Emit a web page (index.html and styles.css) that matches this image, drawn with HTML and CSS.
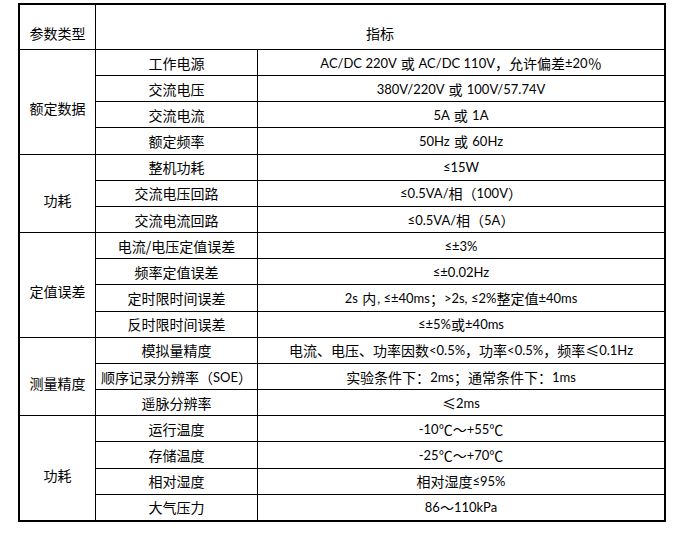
FILE: index.html
```html
<!DOCTYPE html>
<html lang="zh-CN">
<head>
<meta charset="utf-8">
<title>技术参数</title>
<link rel="stylesheet" href="styles.css">
</head>
<body>
<div class="spec">
  <div class="cell head">参数类型</div>
  <div class="cell head wide">指标</div>

  <div class="cell group span4">额定数据</div>
  <div class="cell item">工作电源</div>
  <div class="cell value">AC/DC 220V <span class="cj sp">或</span> AC/DC 110V<span class="cj">，允许偏差</span>±20<span class="cj">％</span></div>
  <div class="cell item">交流电压</div>
  <div class="cell value">380V/220V <span class="cj sp">或</span> 100V/57.74V</div>
  <div class="cell item">交流电流</div>
  <div class="cell value">5A <span class="cj sp">或</span> 1A</div>
  <div class="cell item">额定频率</div>
  <div class="cell value">50Hz <span class="cj sp">或</span> 60Hz</div>

  <div class="cell group span3">功耗</div>
  <div class="cell item">整机功耗</div>
  <div class="cell value">≤15W</div>
  <div class="cell item">交流电压回路</div>
  <div class="cell value">≤0.5VA/<span class="cj">相（</span>100V<span class="cj">）</span></div>
  <div class="cell item">交流电流回路</div>
  <div class="cell value">≤0.5VA/<span class="cj">相（</span>5A<span class="cj">）</span></div>

  <div class="cell group span4">定值误差</div>
  <div class="cell item">电流/电压定值误差</div>
  <div class="cell value">≤±3%</div>
  <div class="cell item">频率定值误差</div>
  <div class="cell value">≤±0.02Hz</div>
  <div class="cell item">定时限时间误差</div>
  <div class="cell value">2s <span class="cj sp">内</span>, ≤±40ms<span class="cj">；</span>&gt;2s, ≤2%<span class="cj">整定值</span>±40ms</div>
  <div class="cell item">反时限时间误差</div>
  <div class="cell value">≤±5%<span class="cj">或</span>±40ms</div>

  <div class="cell group span3">测量精度</div>
  <div class="cell item">模拟量精度</div>
  <div class="cell value"><span class="cj">电流、电压、功率因数</span>&lt;0.5%<span class="cj">，功率</span>&lt;0.5%<span class="cj">，频率≤</span>0.1Hz</div>
  <div class="cell item">顺序记录分辨率（<span class="lat">SOE</span>）</div>
  <div class="cell value"><span class="cj">实验条件下：</span>2ms<span class="cj">；通常条件下：</span>1ms</div>
  <div class="cell item">遥脉分辨率</div>
  <div class="cell value"><span class="cj">≤</span>2ms</div>

  <div class="cell group span4">功耗</div>
  <div class="cell item">运行温度</div>
  <div class="cell value">-10<span class="cj">℃～</span>+55<span class="cj">℃</span></div>
  <div class="cell item">存储温度</div>
  <div class="cell value">-25<span class="cj">℃～</span>+70<span class="cj">℃</span></div>
  <div class="cell item">相对湿度</div>
  <div class="cell value"><span class="cj">相对湿度</span>≤95%</div>
  <div class="cell item">大气压力</div>
  <div class="cell value">86<span class="cj">～</span>110kPa</div>
</div>
</body>
</html>
```

FILE: styles.css
```css
html, body {
  margin: 0;
  padding: 0;
  background: #ffffff;
}

body {
  font-family: "Noto Sans CJK SC", sans-serif;
  color: #000000;
}

.spec {
  box-sizing: border-box;
  margin: 3px 0 0 18px;
  width: 648px;
  height: 519px;
  border: 2px solid #000000;
  background: #000000;
  display: grid;
  grid-template-columns: 75px 161px 1fr;
  grid-template-rows: 44px repeat(18, 1fr);
  gap: 1px;
}

.cell {
  background: #ffffff;
  display: flex;
  align-items: center;
  justify-content: center;
  text-align: center;
  white-space: pre;
  font-size: 14px;
  line-height: 18px;
  min-width: 0;
  min-height: 0;
}

.head {
  padding-top: 11px;
  grid-column: 1;
}

.head.wide {
  grid-column: 2 / span 2;
}

.group {
  grid-column: 1;
  padding-top: 13px;
}

.span3 {
  grid-row: span 3;
}

.span4 {
  grid-row: span 4;
}

.item {
  grid-column: 2;
}

.value {
  grid-column: 3;
  font-family: "Lato", "Noto Sans CJK SC", sans-serif;
  font-size: 13px;
}

.cj {
  font-family: "Noto Sans CJK SC", sans-serif;
  font-size: 14px;
}

.sp {
  margin: 0 1px;
}

.lat {
  font-family: "Lato", sans-serif;
  font-size: 13px;
}
```
